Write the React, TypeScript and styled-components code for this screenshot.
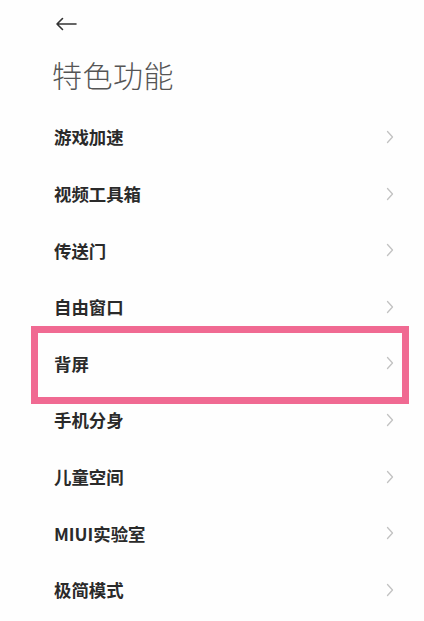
import React from "react";
import styled, { createGlobalStyle } from "styled-components";

const Global = createGlobalStyle`
  html, body { margin: 0; padding: 0; background: #ffffff; }
  body { font-family: "Noto Sans CJK SC", "Noto Sans", sans-serif; }
`;

const Page = styled.div`
  width: 424px;
  height: 621px;
  overflow: hidden;
  background: #fefefe;
  display: flex;
  flex-direction: column;
`;

const TopBar = styled.div`
  height: 48px;
  display: flex;
  align-items: center;
  padding-left: 55px;
`;

const Title = styled.h1`
  margin: 6px 0 0 0;
  padding-left: 52px;
  height: 40px;
  line-height: 40px;
  font-size: 30px;
  font-weight: 300;
  color: #555;
  letter-spacing: 0.5px;
`;

const List = styled.div`
  margin-top: 14.7px;
  display: flex;
  flex-direction: column;
`;

const Row = styled.div`
  position: relative;
  height: 56.6px;
  display: flex;
  align-items: center;
  justify-content: space-between;
  padding: 0 30px 0 54px;
`;

const Label = styled.span`
  font-size: 17.4px;
  font-weight: 700;
  color: #2a2a2a;
`;

const Highlight = styled.div`
  position: absolute;
  left: 31px;
  right: 15px;
  top: -9px;
  bottom: -12px;
  border: 7px solid #f06a92;
  pointer-events: none;
`;

const Back = () => (
  <svg width="22" height="14" viewBox="0 0 22 14" fill="none">
    <path d="M21 7H2M7.5 1.5L2 7l5.5 5.5" stroke="#333" strokeWidth="1.6" strokeLinecap="round" strokeLinejoin="round" />
  </svg>
);

const Chevron = () => (
  <svg width="8" height="14" viewBox="0 0 8 14" fill="none">
    <path d="M1.5 1.5L6.5 7l-5 5.5" stroke="#c2c2c2" strokeWidth="1.3" strokeLinecap="round" strokeLinejoin="round" />
  </svg>
);

const items = ["游戏加速", "视频工具箱", "传送门", "自由窗口", "背屏", "手机分身", "儿童空间", "MIUI实验室", "极简模式"];

export default function App() {
  return (
    <>
      <Global />
      <Page>
        <TopBar>
          <Back />
        </TopBar>
        <Title>特色功能</Title>
        <List>
          {items.map((t) => (
            <Row key={t}>
              <Label>{t}</Label>
              <Chevron />
              {t === "背屏" && <Highlight />}
            </Row>
          ))}
        </List>
      </Page>
    </>
  );
}
